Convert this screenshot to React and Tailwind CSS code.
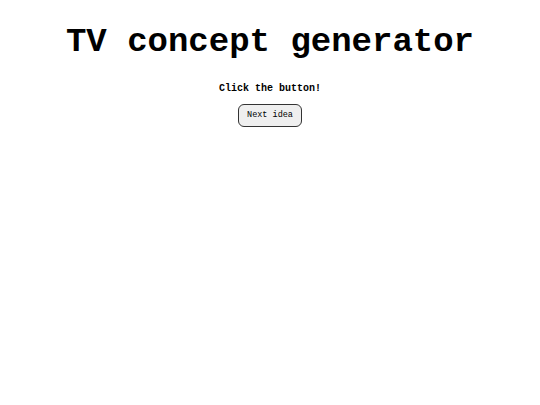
export default function App() {
  return (
    <div className="min-h-[405px] bg-white flex flex-col items-center font-['Liberation_Mono',monospace] text-black">
      <h1 className="mt-[23px] text-[34px] leading-[38px] font-bold">TV concept generator</h1>
      <p className="mt-[22px] text-[10px] leading-[12px] font-bold">Click the button!</p>
      <button className="mt-[9px] w-[64px] h-[23px] rounded-[6px] border border-[#333] bg-[#efefef] text-[8.5px] font-normal leading-none">
        Next idea
      </button>
    </div>
  )
}
